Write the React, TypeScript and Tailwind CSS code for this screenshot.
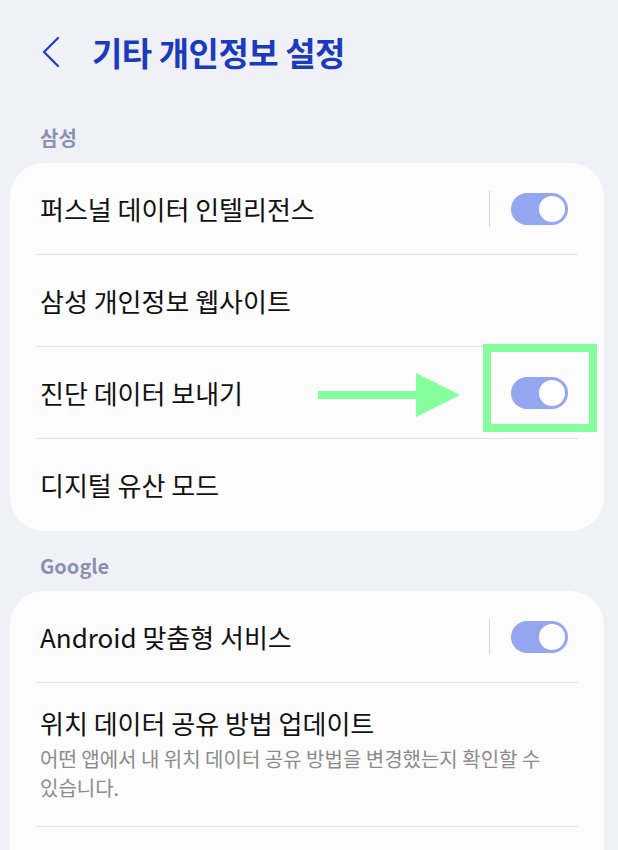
import React from "react";

const font = { fontFamily: '"Noto Sans CJK KR", "Noto Sans", sans-serif' };

function Toggle({ divider = false }: { divider?: boolean }) {
  return (
    <div className="flex items-center">
      {divider && <div className="mr-[21px] h-[36px] w-[1.5px] bg-[#d6d6d6]" />}
      <div className="flex h-[32px] w-[57px] items-center justify-end rounded-full bg-[#95a6f0] pr-[3px]">
        <div className="h-[26px] w-[26px] rounded-full bg-white" />
      </div>
    </div>
  );
}

function Row({
  title,
  sub,
  last,
  children,
}: {
  title: string;
  sub?: string;
  last?: boolean;
  children?: React.ReactNode;
}) {
  return (
    <div
      className={`relative flex items-center justify-between pl-1 pr-[10px] ${
        sub ? "min-h-[143px] py-6" : "h-[92px]"
      } ${last ? "" : "border-b-[1.5px] border-[#e2e2e2]"}`}
    >
      <div className="flex flex-col">
        <span className="text-[26px] leading-[32px] text-[#111]">{title}</span>
        {sub && (
          <span className="mt-[5px] break-keep text-[20px] leading-[29px] text-[#8b8b8b]">{sub}</span>
        )}
      </div>
      {children}
    </div>
  );
}

function Section({ label, children }: { label: string; children: React.ReactNode }) {
  return (
    <>
      <div className="mb-[11px] px-[40px] text-[20px] font-bold leading-[28px] text-[#8b91b4]">{label}</div>
      <div className="ml-[10px] mr-[14px] rounded-[34px] bg-[#fcfcfc] px-[26px]">{children}</div>
    </>
  );
}

export default function App() {
  return (
    <div className="h-[850px] w-[618px] overflow-hidden bg-[#f0f1f6]" style={font}>
      <header className="flex h-[104px] items-center pl-[42px]">
        <svg width="18" height="32" viewBox="0 0 18 32" className="mr-[32px]">
          <path d="M16 2 L2 16 L16 30" fill="none" stroke="#1f3cc0" strokeWidth="2.2" strokeLinecap="round" strokeLinejoin="round" />
        </svg>
        <h1 className="text-[33px] font-bold leading-[40px] tracking-[-0.5px] text-[#1b3abe]">
          기타 개인정보 설정
        </h1>
      </header>

      <div className="h-[20px]" />
      <Section label="삼성">
        <Row title="퍼스널 데이터 인텔리전스">
          <Toggle divider />
        </Row>
        <Row title="삼성 개인정보 웹사이트" />
        <Row title="진단 데이터 보내기">
          <Toggle />
          <svg className="absolute left-[282px] top-[26px]" width="144" height="44" viewBox="0 0 144 44">
            <rect x="0" y="18" width="100" height="8" fill="#85ff9e" />
            <polygon points="98,0 142,22 98,44" fill="#85ff9e" />
          </svg>
          <div className="absolute left-[447px] top-[-3px] h-[88px] w-[114px] border-[8px] border-[#85ff9e]" />
        </Row>
        <Row title="디지털 유산 모드" last />
      </Section>

      <div className="h-[21px]" />
      <Section label="Google">
        <Row title="Android 맞춤형 서비스">
          <Toggle divider />
        </Row>
        <Row
          title="위치 데이터 공유 방법 업데이트"
          sub="어떤 앱에서 내 위치 데이터 공유 방법을 변경했는지 확인할 수 있습니다."
        />
        <div className="h-[60px]" />
      </Section>
    </div>
  );
}
